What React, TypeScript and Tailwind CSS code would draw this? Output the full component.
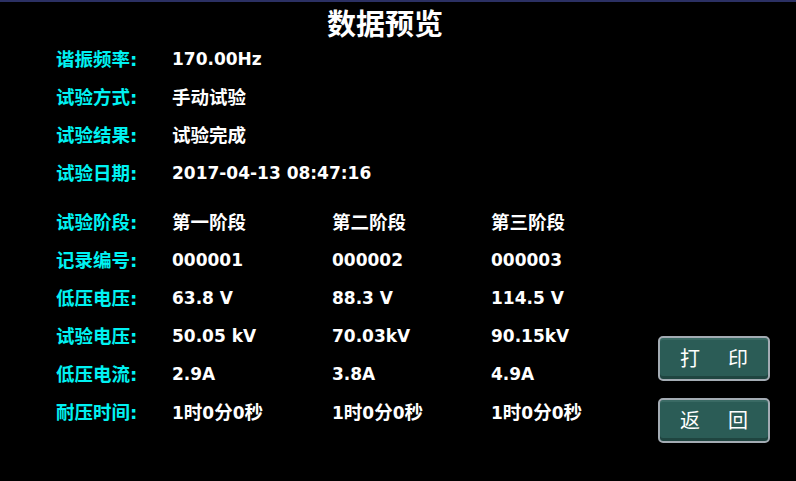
const baseFont = { fontFamily: '"DejaVu Sans", "Noto Sans CJK SC", sans-serif' };

const infoRows: [string, string][] = [
  ["谐振频率:", "170.00Hz"],
  ["试验方式:", "手动试验"],
  ["试验结果:", "试验完成"],
  ["试验日期:", "2017-04-13 08:47:16"],
];

const stageRows: [string, string, string, string][] = [
  ["试验阶段:", "第一阶段", "第二阶段", "第三阶段"],
  ["记录编号:", "000001", "000002", "000003"],
  ["低压电压:", "63.8 V", "88.3 V", "114.5 V"],
  ["试验电压:", "50.05 kV", "70.03kV", "90.15kV"],
  ["低压电流:", "2.9A", "3.8A", "4.9A"],
  ["耐压时间:", "1时0分0秒", "1时0分0秒", "1时0分0秒"],
];

// CJK glyphs are drawn a touch larger than the digits, as on the device screen
function Value({ text }: { text: string }) {
  const runs = text.match(/[\u4e00-\u9fff]+|[^\u4e00-\u9fff]+/g) ?? [];
  return (
    <span className="text-[17px] font-bold">
      {runs.map((r, i) =>
        /[\u4e00-\u9fff]/.test(r) ? (
          <span key={i} className="text-[18.5px]">
            {r}
          </span>
        ) : (
          <span key={i}>{r}</span>
        ),
      )}
    </span>
  );
}

function Label({ text }: { text: string }) {
  return <div className="w-[116px] shrink-0 text-[18.5px] font-bold text-[#00f2f2]">{text}</div>;
}

function Button({ text }: { text: string }) {
  return (
    <button
      type="button"
      className="flex h-[45px] w-[112px] items-center justify-center gap-[28px] rounded-[5px] border-2 border-[#a3abb3] bg-[#2b5c56] text-[20px] text-white shadow-[inset_0_-3px_0_#1f4540,inset_0_2px_0_#3a6a64]"
    >
      {text.split("").map((c) => (
        <span key={c}>{c}</span>
      ))}
    </button>
  );
}

export default function App() {
  return (
    <div
      className="flex h-[481px] w-[796px] flex-col overflow-hidden border-t-2 border-[#2b3063] bg-black text-white"
      style={baseFont}
    >
      <h1 className="flex h-[39px] shrink-0 items-end justify-center pb-[1px] pr-[26px] text-[29px] font-bold leading-none">
        数据预览
      </h1>

      <div className="flex flex-1">
        <div className="flex flex-col pl-[56px]">
          {infoRows.map(([label, value]) => (
            <div key={label} className="flex h-[38px] items-center">
              <Label text={label} />
              <Value text={value} />
            </div>
          ))}
          <div className="h-[11px]" />
          {stageRows.map(([label, a, b, c]) => (
            <div key={label} className="flex h-[38px] items-center">
              <Label text={label} />
              <div className="w-[160px]">
                <Value text={a} />
              </div>
              <div className="w-[159px]">
                <Value text={b} />
              </div>
              <Value text={c} />
            </div>
          ))}
        </div>

        <div className="ml-auto mr-[26px] flex flex-col justify-end gap-[17px] pb-[38px]">
          <Button text="打印" />
          <Button text="返回" />
        </div>
      </div>
    </div>
  );
}
